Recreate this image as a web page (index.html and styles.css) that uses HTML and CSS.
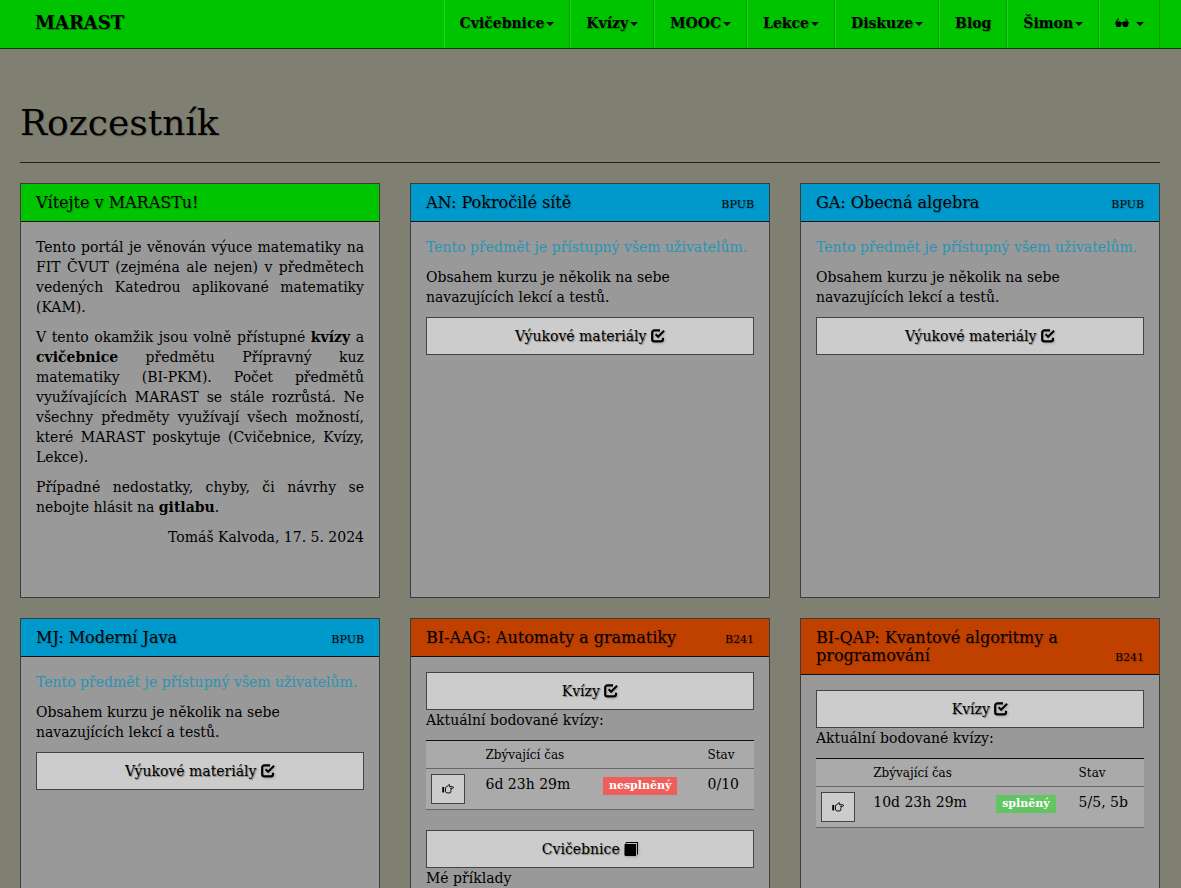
FILE: index.html
```html
<!DOCTYPE html>
<html lang="cs">
<head>
<meta charset="utf-8">
<title>MARAST</title>
<link rel="stylesheet" href="styles.css">
</head>
<body>
<svg class="sprite" aria-hidden="true">
  <symbol id="check" viewBox="0 0 14 14">
    <path d="M9 1.400H3.400a2.200 2.200 0 0 0-2.200 2.200v6.600a2.200 2.200 0 0 0 2.200 2.200h6.400a2.200 2.200 0 0 0 2.200-2.200V8.800" fill="none" stroke="currentColor" stroke-width="2.200"/>
    <path d="M4.600 5.200l2.500 2.500 6-6" fill="none" stroke="currentColor" stroke-width="2.100"/>
  </symbol>
  <symbol id="hand" viewBox="0 0 14 14">
    <path d="M.3 4.6h2.2v6.4H.3z" fill="currentColor"/>
    <path d="M4 5.2l2.4-1.400 1.600-2c1.200.1 1.100 1 .5 2.500h4c1.200 0 1.200 1.900 0 1.900H10l.8 1.500-.6 1.200.2 1.400-1 1.300H6L4 10.400z" fill="none" stroke="currentColor" stroke-width="1.100" stroke-linejoin="round"/>
  </symbol>
  <symbol id="book" viewBox="0 0 14 14">
    <path d="M1 1.600L2.200 0H14v12l-1 1V1H3L2 1.600z" fill="currentColor"/>
    <path d="M.6 2H12v12H1.400L.4 13z" fill="currentColor"/>
  </symbol>
  <symbol id="glasses" viewBox="0 0 14 10">
    <path d="M4 .8C2.600.6 2.200 2 1.400 4M10 .8c1.400-.2 1.800 1.200 2.600 3.200" fill="none" stroke="currentColor" stroke-width="1.100"/>
    <path d="M0 4.200h14v1.200H0z" fill="currentColor"/>
    <circle cx="3.600" cy="6.200" r="2.900" fill="currentColor"/>
    <circle cx="10.400" cy="6.200" r="2.900" fill="currentColor"/>
  </symbol>
</svg>
<header class="navbar">
  <a class="brand" href="#">MARAST</a>
  <nav class="menu">
    <a href="#">Cvičebnice<span class="caret"></span></a>
    <a href="#">Kvízy<span class="caret"></span></a>
    <a href="#">MOOC<span class="caret"></span></a>
    <a href="#">Lekce<span class="caret"></span></a>
    <a href="#">Diskuze<span class="caret"></span></a>
    <a href="#">Blog</a>
    <a href="#">Šimon<span class="caret"></span></a>
    <a href="#" aria-label="Vzhled"><svg class="glasses"><use href="#glasses"/></svg> <span class="caret"></span></a>
  </nav>
</header>
<main class="page">
  <h1 class="title">Rozcestník</h1>
  <div class="cards">
    <section class="card success">
      <header class="card-head"><h2>Vítejte v MARASTu!</h2></header>
      <div class="card-body welcome">
        <p>Tento portál je věnován výuce matematiky na FIT ČVUT (zejména ale nejen) v předmětech vedených Katedrou aplikované matematiky (KAM).</p>
        <p>V tento okamžik jsou volně přístupné <a href="#">kvízy</a> a <a href="#">cvičebnice</a> předmětu Přípravný kuz matematiky (BI-PKM). Počet předmětů využívajících MARAST se stále rozrůstá. Ne všechny předměty využívají všech možností, které MARAST poskytuje (Cvičebnice, Kvízy, Lekce).</p>
        <p>Případné nedostatky, chyby, či návrhy se nebojte hlásit na <a href="#">gitlabu</a>.</p>
        <p class="sign">Tomáš Kalvoda, 17. 5. 2024</p>
      </div>
    </section>
    <section class="card info">
      <header class="card-head"><h2>AN: Pokročilé sítě</h2><small>BPUB</small></header>
      <div class="card-body">
        <p class="note">Tento předmět je přístupný všem uživatelům.</p>
        <p>Obsahem kurzu je několik na sebe navazujících lekcí a testů.</p>
        <a class="btn" href="#">Výukové materiály <svg class="icon"><use href="#check"/></svg></a>
      </div>
    </section>
    <section class="card info">
      <header class="card-head"><h2>GA: Obecná algebra</h2><small>BPUB</small></header>
      <div class="card-body">
        <p class="note">Tento předmět je přístupný všem uživatelům.</p>
        <p>Obsahem kurzu je několik na sebe navazujících lekcí a testů.</p>
        <a class="btn" href="#">Výukové materiály <svg class="icon"><use href="#check"/></svg></a>
      </div>
    </section>
    <section class="card info">
      <header class="card-head"><h2>MJ: Moderní Java</h2><small>BPUB</small></header>
      <div class="card-body">
        <p class="note">Tento předmět je přístupný všem uživatelům.</p>
        <p>Obsahem kurzu je několik na sebe navazujících lekcí a testů.</p>
        <a class="btn" href="#">Výukové materiály <svg class="icon"><use href="#check"/></svg></a>
      </div>
    </section>
    <section class="card course">
      <header class="card-head"><h2>BI-AAG: Automaty a gramatiky</h2><small>B241</small></header>
      <div class="card-body">
        <a class="btn" href="#">Kvízy <svg class="icon"><use href="#check"/></svg></a>
        <p>Aktuální bodované kvízy:</p>
        <table class="quizzes">
          <thead><tr><th></th><th>Zbývající čas</th><th></th><th>Stav</th></tr></thead>
          <tbody><tr>
            <td><a class="open" href="#" aria-label="Otevřít"><svg class="icon"><use href="#hand"/></svg></a></td>
            <td>6d 23h 29m</td>
            <td><span class="label danger">nesplněný</span></td>
            <td>0/10</td>
          </tr></tbody>
        </table>
        <a class="btn" href="#">Cvičebnice <svg class="icon"><use href="#book"/></svg></a>
        <p>Mé příklady</p>
      </div>
    </section>
    <section class="card course">
      <header class="card-head"><h2>BI-QAP: Kvantové algoritmy a programování</h2><small>B241</small></header>
      <div class="card-body">
        <a class="btn" href="#">Kvízy <svg class="icon"><use href="#check"/></svg></a>
        <p>Aktuální bodované kvízy:</p>
        <table class="quizzes">
          <thead><tr><th></th><th>Zbývající čas</th><th></th><th>Stav</th></tr></thead>
          <tbody><tr>
            <td><a class="open" href="#" aria-label="Otevřít"><svg class="icon"><use href="#hand"/></svg></a></td>
            <td>10d 23h 29m</td>
            <td><span class="label done">splněný</span></td>
            <td>5/5, 5b</td>
          </tr></tbody>
        </table>
      </div>
    </section>
  </div>
</main>
</body>
</html>
```
FILE: styles.css
```css
* { box-sizing: border-box; }
html { scrollbar-width: none; }
body {
  margin: 0;
  background: #808072;
  color: #000;
  font: 14px/20px "DejaVu Serif", serif;
}
a { color: inherit; text-decoration: none; }
.sprite { position: absolute; width: 0; height: 0; }
.navbar {
  display: flex;
  justify-content: space-between;
  padding: 0 21px 0 35px;
  background: #00c400;
  border-bottom: 1px solid #063c06;
  font-weight: bold;
  text-shadow: 1px 1px 1px rgba(0, 0, 0, .3);
}
.brand { padding: 13px 0; font-size: 18px; }
.menu { display: flex; border-right: 1px solid #00a000; }
.menu a {
  padding: 13px 15px 15px;
  border-left: 1px solid #22d422;
  border-right: 1px solid #00a000;
}
.menu a:last-child { border-right: 0; }
.caret {
  display: inline-block;
  margin-left: 2px;
  vertical-align: middle;
  border-top: 4px solid;
  border-left: 4px solid transparent;
  border-right: 4px solid transparent;
}
.glasses { width: 14px; height: 10px; }
.page { padding: 0 21px 0 20px; }
.title {
  margin: 54px 0 20px;
  padding-bottom: 19px;
  border-bottom: 1px solid #222;
  font-size: 36px;
  font-weight: normal;
  line-height: 40px;
  text-shadow: 1px 1px 1px rgba(0, 0, 0, .2);
}
.cards {
  display: grid;
  grid-template-columns: repeat(3, minmax(0, 1fr));
  gap: 20px 30px;
}
.card { min-height: 415px; border: 1px solid #3c3c3c; background: #999; }
.card-head {
  display: flex;
  justify-content: space-between;
  align-items: last baseline;
  padding: 10px 15px 9px;
  border-bottom: 1px solid #111;
  text-shadow: 1px 1px 1px rgba(0, 0, 0, .2);
}
.card-head h2 { margin: 0; font-size: 16px; font-weight: normal; line-height: 18px; }
.card-head small { font-size: 11px; line-height: 12px; }
.success .card-head { background: #00c400; }
.info .card-head { background: #0099cc; }
.course .card-head { background: #c04000; }
.card-body { padding: 15px; }
.card-body p { margin: 0 0 10px; }
.welcome { text-align: justify; }
.welcome a { font-weight: bold; }
.card-body .sign { text-align: right; }
.card-body .note { color: #2a94b4; }
.btn {
  display: block;
  padding: 8px 12px;
  border: 1px solid #444;
  background: #ccc;
  text-align: center;
  text-shadow: 1px 1px 1px rgba(0, 0, 0, .4);
}
.icon { width: 14px; height: 14px; vertical-align: -2px; }
.btn .icon { filter: drop-shadow(1px 1px 1px rgba(0, 0, 0, .2)); }
.quizzes {
  width: 100%;
  margin-bottom: 20px;
  border-collapse: collapse;
  border-top: 1px solid #111;
  background: #aaa;
}
.quizzes th {
  padding: 6px 5px 4px;
  font-size: 12px;
  line-height: 17px;
  font-weight: normal;
  text-align: left;
}
.quizzes td { padding: 5px; border: solid #666; border-width: 1px 0; vertical-align: top; }
.open {
  display: block;
  width: 34px;
  padding: 4px 10px;
  border: 1px solid #444;
  background: #ccc;
}
.open .icon { width: 12px; height: 12px; vertical-align: -1px; }
.label {
  display: inline-block;
  padding: 3px 6px;
  color: #fff;
  font-size: 11px;
  font-weight: bold;
  line-height: 12px;
}
.danger { background: #ee5f5b; }
.done { background: #62c462; }
```
